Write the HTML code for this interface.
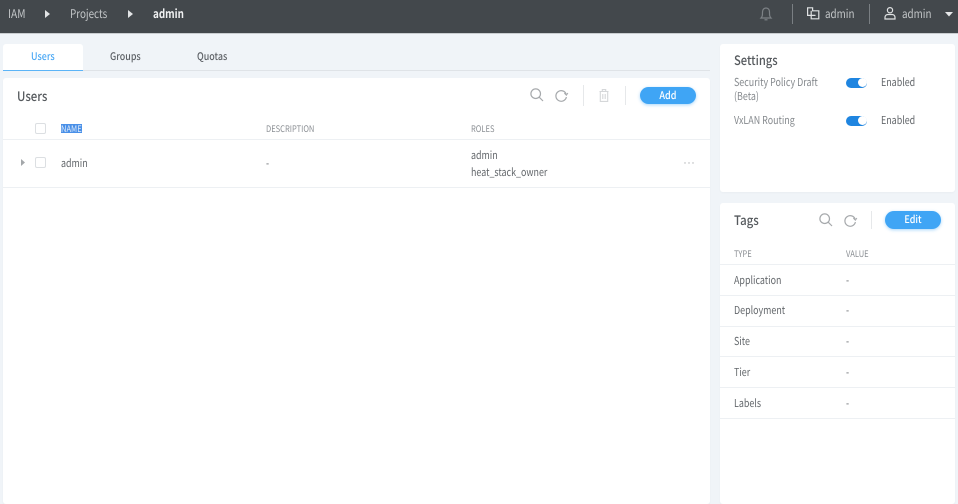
<!DOCTYPE html>
<html><head><meta charset="utf-8">
<style>
html,body{margin:0;padding:0;width:958px;height:504px;overflow:hidden;background:#f0f4f8;font-family:"Noto Sans CJK JP","Liberation Sans",sans-serif;color:#5f6368;text-rendering:geometricPrecision}
.a{position:absolute;white-space:nowrap;line-height:1;transform:scaleX(.85);transform-origin:0 0}
.b{position:absolute}
.card{position:absolute;background:#fff;border-radius:3px;box-shadow:0 1px 2px rgba(0,0,0,.03)}
.h{font-size:9px;color:#8b8f94;transform:scaleX(.84)}
.t{font-size:11px;color:#63676b;transform:scaleX(.81)}
.line{position:absolute;height:1px;background:#edf0f3}
.btn{position:absolute;background:#3fa5f5;color:#fff;border-radius:10px;font-size:10.5px;font-weight:500;text-align:center;box-shadow:0 1px 3px rgba(63,165,245,.45)}
.btn span{display:inline-block;transform:scaleX(.86)}
.tog{position:absolute;width:21px;height:10px;border-radius:5px;background:#1f85e0}
.tog i{position:absolute;right:.5px;top:.5px;width:9px;height:9px;border-radius:50%;background:#fff}
.cb{position:absolute;width:9px;height:9px;border:1px solid #dcdfe2;border-radius:2px}
svg{position:absolute;overflow:visible}
</style></head><body>
<div class="b" style="left:0;top:0;width:958px;height:34px;background:#43484c;border-bottom:1px solid #c9cdd0;box-sizing:border-box"></div>
<div class="a" style="left:8px;top:8px;font-size:12px;color:#c3c6c8">IAM</div>
<svg style="left:45px;top:10px" width="5" height="8"><path d="M0 0L5 4L0 8Z" fill="#e2e4e5"/></svg>
<div class="a" style="left:70px;top:8px;font-size:12px;color:#c3c6c8;transform:scaleX(.82)">Projects</div>
<svg style="left:128px;top:10px" width="5" height="8"><path d="M0 0L5 4L0 8Z" fill="#e2e4e5"/></svg>
<div class="a" style="left:153px;top:8px;font-size:12px;font-weight:700;color:#f0f1f2;transform:scaleX(.82)">admin</div>
<svg style="left:760px;top:7px" width="12" height="14" fill="none" stroke="#7d8286" stroke-width="1.2"><path d="M1 11C2.5 9.5 2.5 8 2.5 5C2.5 2.5 4 1 6 1C8 1 9.5 2.5 9.5 5C9.5 8 9.5 9.5 11 11Z"/><path d="M4.5 12.8H7.5"/></svg>
<div class="b" style="left:792px;top:4px;width:1px;height:20px;background:#7a7f83"></div>
<svg style="left:807px;top:7px" width="13" height="13" fill="none" stroke="#e0e2e3" stroke-width="1.2"><path d="M.6 .8H5.6V3.8H11.8V11.8H4.2V8.4H.6Z"/><path d="M4.2 3.8V8.4H8.5"/></svg>
<div class="a" style="left:825px;top:8px;font-size:12px;color:#c3c6c8;transform:scaleX(.82)">admin</div>
<div class="b" style="left:869px;top:4px;width:1px;height:20px;background:#7a7f83"></div>
<svg style="left:884px;top:7px" width="12" height="13" fill="none" stroke="#e0e2e3" stroke-width="1.2"><circle cx="6" cy="3.2" r="2.6"/><path d="M1 12V10.5C1 8.5 2.5 7.5 4 7.5H8C9.5 7.5 11 8.5 11 10.5V12Z"/></svg>
<div class="a" style="left:902px;top:8px;font-size:12px;color:#c3c6c8;transform:scaleX(.82)">admin</div>
<svg style="left:945px;top:12px" width="8" height="5"><path d="M0 0H8L4 4.5Z" fill="#e6e8e9"/></svg>

<!-- tabs -->
<div class="b" style="left:3px;top:44px;width:80px;height:27px;background:#fff;border-radius:3px 3px 0 0;border-bottom:1px solid #5cb4f7;box-sizing:border-box"></div>
<div class="line" style="left:83px;top:70px;width:627px;background:#dfe3e7"></div>
<div class="a" style="left:31px;top:52px;font-size:10.5px;color:#4aa8f5;font-weight:500">Users</div>
<div class="a" style="left:110px;top:52px;font-size:10.5px;color:#5f6368;font-weight:500">Groups</div>
<div class="a" style="left:197px;top:52px;font-size:10.5px;color:#5f6368;font-weight:500">Quotas</div>

<!-- users card -->
<div class="card" style="left:3px;top:78px;width:707px;height:426px"></div>
<div class="a" style="left:17px;top:88.5px;font-size:13px;font-weight:500;color:#55595d;transform:scaleX(.88)">Users</div>
<svg style="left:530px;top:88px" width="14" height="14" fill="none" stroke="#a6a9ac" stroke-width="1.2"><circle cx="5.7" cy="5.7" r="4.8"/><path d="M9.2 9.2L13 13"/></svg>
<svg style="left:555px;top:88.5px" width="13" height="13" fill="none" stroke="#a6a9ac" stroke-width="1.2"><path d="M11.2 5.2A5.3 5.3 0 1 0 11.4 8"/><path d="M9.3 4.2L11.4 6.2L12.9 4" stroke-width="1"/></svg>
<div class="b" style="left:583px;top:85px;width:1px;height:21px;background:#e6e8ea"></div>
<svg style="left:599px;top:89px" width="10" height="13" fill="none" stroke="#d5d7d9" stroke-width="1.1"><path d="M.5 2.5H9.5M3.3 2.3V.6H6.7V2.3M1.3 2.5V12.4H8.7V2.5M3.8 5V10M6.2 5V10"/></svg>
<div class="b" style="left:625px;top:86px;width:1px;height:19px;background:#e6e8ea"></div>
<div class="btn" style="left:640px;top:87px;width:56px;height:17px;line-height:17px"><span>Add</span></div>
<div class="line" style="left:3px;top:139px;width:707px"></div>
<div class="cb" style="left:35px;top:122.5px"></div>
<div class="b" style="left:61px;top:124px;width:21px;height:9px;background:#4a90e8"></div>
<div class="a h" style="left:61px;top:124px;color:#dbe9fa">NAME</div>
<div class="a h" style="left:266px;top:124px">DESCRIPTION</div>
<div class="a h" style="left:471px;top:124px">ROLES</div>
<svg style="left:21px;top:159px" width="4" height="7"><path d="M0 0L4 3.5L0 7Z" fill="#a4a7aa"/></svg>
<div class="cb" style="left:35px;top:156.5px"></div>
<div class="a t" style="left:61px;top:158px">admin</div>
<div class="a t" style="left:266px;top:158px">-</div>
<div class="a t" style="left:471px;top:150px">admin</div>
<div class="a t" style="left:471px;top:166.5px">heat_stack_owner</div>
<svg style="left:684px;top:162px" width="11" height="2"><circle cx="1" cy="1" r=".7" fill="#b0b3b6"/><circle cx="5" cy="1" r=".7" fill="#b0b3b6"/><circle cx="9" cy="1" r=".7" fill="#b0b3b6"/></svg>
<div class="line" style="left:3px;top:187px;width:707px"></div>

<!-- settings -->
<div class="card" style="left:720px;top:44px;width:235px;height:148px"></div>
<div class="a" style="left:734px;top:52.5px;font-size:13px;font-weight:500;color:#55595d;transform:scaleX(.86)">Settings</div>
<div class="a t" style="left:734px;top:76.5px;color:#85898d">Security Policy Draft</div>
<div class="a t" style="left:734px;top:90.5px;color:#85898d">(Beta)</div>
<div class="tog" style="left:846px;top:77.5px"><i></i></div>
<div class="a t" style="left:881px;top:76.5px">Enabled</div>
<div class="a t" style="left:734px;top:114.5px;color:#85898d">VxLAN Routing</div>
<div class="tog" style="left:846px;top:115.5px"><i></i></div>
<div class="a t" style="left:881px;top:114.5px">Enabled</div>

<!-- tags -->
<div class="card" style="left:720px;top:203px;width:235px;height:301px"></div>
<div class="a" style="left:734px;top:213px;font-size:13px;font-weight:500;color:#55595d;transform:scaleX(.88)">Tags</div>
<svg style="left:819px;top:213px" width="14" height="14" fill="none" stroke="#a6a9ac" stroke-width="1.2"><circle cx="5.7" cy="5.7" r="4.8"/><path d="M9.2 9.2L13 13"/></svg>
<svg style="left:844px;top:213.5px" width="13" height="13" fill="none" stroke="#a6a9ac" stroke-width="1.2"><path d="M11.2 5.2A5.3 5.3 0 1 0 11.4 8"/><path d="M9.3 4.2L11.4 6.2L12.9 4" stroke-width="1"/></svg>
<div class="b" style="left:871px;top:211px;width:1px;height:18px;background:#e6e8ea"></div>
<div class="btn" style="left:885px;top:211px;width:56px;height:18px;line-height:18px"><span>Edit</span></div>
<div class="a h" style="left:734px;top:249px">TYPE</div>
<div class="a h" style="left:846px;top:249px">VALUE</div>
<div class="line" style="left:720px;top:264px;width:235px"></div>
<div class="a t" style="left:734px;top:275px">Application</div><div class="a t" style="left:846px;top:275px">-</div>
<div class="line" style="left:720px;top:295px;width:235px"></div>
<div class="a t" style="left:734px;top:305px">Deployment</div><div class="a t" style="left:846px;top:305px">-</div>
<div class="line" style="left:720px;top:326px;width:235px"></div>
<div class="a t" style="left:734px;top:336px">Site</div><div class="a t" style="left:846px;top:336px">-</div>
<div class="line" style="left:720px;top:356px;width:235px"></div>
<div class="a t" style="left:734px;top:367px">Tier</div><div class="a t" style="left:846px;top:367px">-</div>
<div class="line" style="left:720px;top:387px;width:235px"></div>
<div class="a t" style="left:734px;top:397.5px">Labels</div><div class="a t" style="left:846px;top:397.5px">-</div>
<div class="line" style="left:720px;top:418px;width:235px"></div>
</body></html>
